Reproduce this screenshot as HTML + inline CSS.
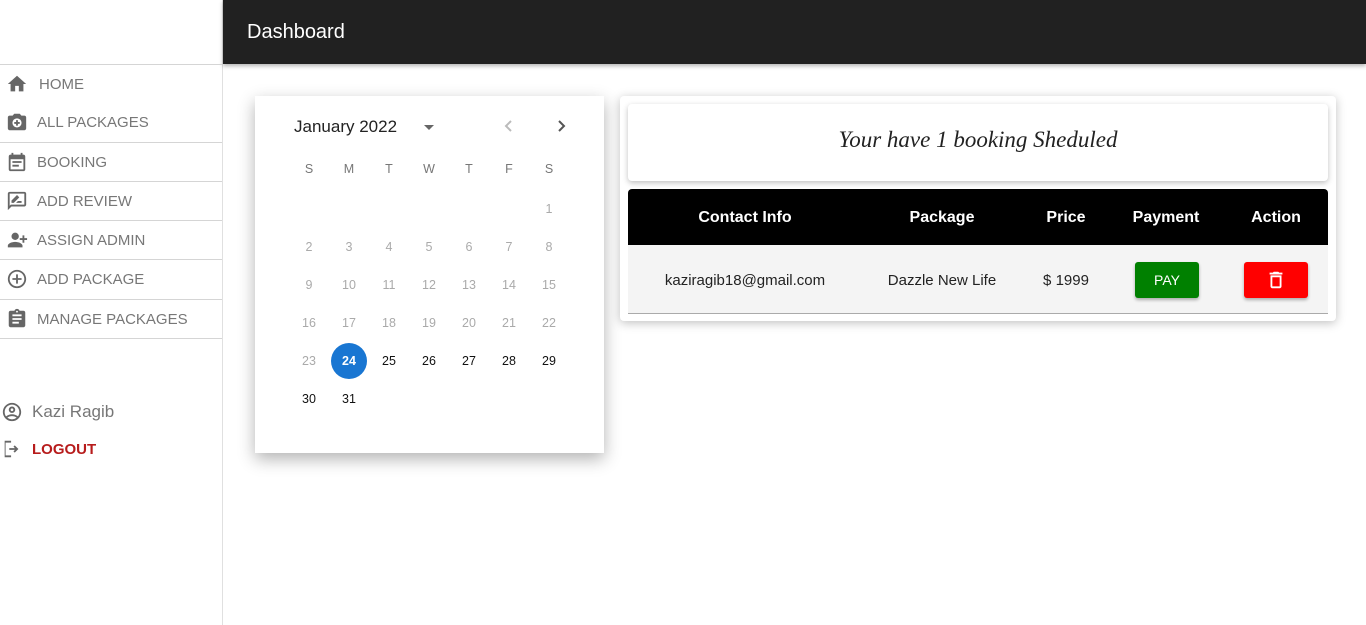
<!DOCTYPE html>
<html><head><style>
*{box-sizing:border-box;margin:0;padding:0}
body{width:1366px;height:625px;background:#fff;font-family:"Liberation Sans",sans-serif;position:relative;overflow:hidden}
.abs{position:absolute}
.side{left:0;top:0;width:223px;height:625px;border-right:1px solid #e0e0e0}
.hdr{left:223px;top:0;width:1143px;height:64px;background:#212121;color:#fff;font-size:20px;line-height:64px;padding-left:24px;box-shadow:0 2px 4px rgba(0,0,0,.3)}
.line{left:0;width:222px;height:1px;background:#d5d5d5}
.item{left:0;width:222px;font-size:15px;color:#777;display:flex;align-items:center}
.item svg{position:absolute;left:6px;width:22px;height:22px;fill:#666}
.item span{position:absolute;left:37px}
.cal{left:255px;top:96px;width:349px;height:357px;background:#fff;box-shadow:0 6px 16px rgba(0,0,0,.3)}
.c{position:absolute;width:36px;height:36px;line-height:36px;text-align:center;font-size:12.5px;margin-left:-18px;margin-top:-17px}
.card{left:620px;top:96px;width:716px;height:225px;background:#fff;box-shadow:0 2px 10px rgba(0,0,0,.25);border-radius:4px}
.th{color:#fff;font-weight:bold;font-size:16px;top:209px;transform:translateX(-50%)}
.td{color:#222;font-size:15px;top:272px;transform:translateX(-50%)}
</style></head><body>
<div class="abs side"></div>
<div class="abs hdr">Dashboard</div>
<div class="abs line" style="top:64px"></div>
<div class="abs line" style="top:142px"></div>
<div class="abs line" style="top:181px"></div>
<div class="abs line" style="top:220px"></div>
<div class="abs line" style="top:259px"></div>
<div class="abs line" style="top:299px"></div>
<div class="abs line" style="top:338px"></div>

<div class="abs item" style="top:74px;height:20px"><svg viewBox="0 0 24 24" style="left:6px"><path d="M10 20v-6h4v6h5v-8h3L12 3 2 12h3v8z"/></svg><span style="left:39px">HOME</span></div>
<div class="abs item" style="top:112px;height:20px"><svg viewBox="0 0 24 24"><path d="M9 3L7.2 5H4c-1.1 0-2 .9-2 2v12c0 1.1.9 2 2 2h16c1.1 0 2-.9 2-2V7c0-1.1-.9-2-2-2h-3.2L15 3zm3 5a5 5 0 110 10 5 5 0 010-10zm-1 2v2H9v2h2v2h2v-2h2v-2h-2v-2z"/></svg><span>ALL PACKAGES</span></div>
<div class="abs item" style="top:152px;height:20px"><svg viewBox="0 0 24 24"><path d="M19 4h-1V2h-2v2H8V2H6v2H5c-1.1 0-2 .9-2 2v14c0 1.1.9 2 2 2h14c1.1 0 2-.9 2-2V6c0-1.1-.9-2-2-2zm0 16H5V9h14zM7 11h10v2H7zm0 4h7v2H7z"/></svg><span>BOOKING</span></div>
<div class="abs item" style="top:191px;height:20px"><svg viewBox="0 0 24 24"><path d="M20 2H4c-1.1 0-2 .9-2 2v18l4-4h14c1.1 0 2-.9 2-2V4c0-1.1-.9-2-2-2zm0 14H5.2L4 17.2V4h16zM11 14h6v-2h-4zM6 14h2.5l6-6-2.5-2.5-6 6z"/></svg><span>ADD REVIEW</span></div>
<div class="abs item" style="top:230px;height:20px"><svg viewBox="0 0 24 24"><path d="M10 4a4 4 0 100 8 4 4 0 000-8zm0 10c-4 0-8 2-8 4v2h16v-2c0-2-4-4-8-4zm10-4V7h-2v3h-3v2h3v3h2v-3h3v-2z"/></svg><span>ASSIGN ADMIN</span></div>
<div class="abs item" style="top:269px;height:20px"><svg viewBox="0 0 24 24"><path d="M13 7h-2v4H7v2h4v4h2v-4h4v-2h-4zm-1-5C6.5 2 2 6.5 2 12s4.5 10 10 10 10-4.5 10-10S17.5 2 12 2zm0 18c-4.4 0-8-3.6-8-8s3.6-8 8-8 8 3.6 8 8-3.6 8-8 8z"/></svg><span>ADD PACKAGE</span></div>
<div class="abs item" style="top:309px;height:20px"><svg viewBox="0 0 24 24"><path d="M19 3h-4.2C14.4 1.8 13.3 1 12 1s-2.4.8-2.8 2H5c-1.1 0-2 .9-2 2v14c0 1.1.9 2 2 2h14c1.1 0 2-.9 2-2V5c0-1.1-.9-2-2-2zm-7 0c.6 0 1 .4 1 1s-.4 1-1 1-1-.4-1-1 .4-1 1-1zm2 14H7v-2h7zm3-4H7v-2h10zm0-4H7V7h10z"/></svg><span>MANAGE PACKAGES</span></div>

<div class="abs item" style="top:401px;height:22px;font-size:17px"><svg viewBox="0 0 24 24" style="left:1px"><path d="M12 2C6.5 2 2 6.5 2 12s4.5 10 10 10 10-4.5 10-10S17.5 2 12 2zm0 18c-1.9 0-3.7-.7-5.1-1.8C8.3 17 10 16.5 12 16.5s3.7.5 5.1 1.7C15.7 19.3 13.9 20 12 20zm6.5-3.2C16.7 15.4 14.5 14.5 12 14.5s-4.7.9-6.5 2.3C4.6 15.5 4 13.8 4 12c0-4.4 3.6-8 8-8s8 3.6 8 8c0 1.8-.6 3.5-1.5 4.8zM12 6c-1.9 0-3.5 1.6-3.5 3.5S10.1 13 12 13s3.5-1.6 3.5-3.5S13.9 6 12 6zm0 5c-.8 0-1.5-.7-1.5-1.5S11.2 8 12 8s1.5.7 1.5 1.5S12.8 11 12 11z"/></svg><span style="left:32px">Kazi Ragib</span></div>
<div class="abs item" style="top:439px;height:20px"><svg viewBox="0 0 24 24" style="left:1px"><path d="M4 3h7v2H5v14h6v2H4zm11 5l4 4-4 4-1.4-1.4 1.6-1.6H9v-2h6.2l-1.6-1.6z"/></svg><span style="left:32px;color:#b71c1c;font-weight:bold">LOGOUT</span></div>

<div class="abs cal">
<div class="abs" style="left:39px;top:21px;font-size:17px;color:#222">January 2022</div>
<div class="abs" style="left:169px;top:29px;width:0;height:0;border-left:5px solid transparent;border-right:5px solid transparent;border-top:5px solid #666"></div>
<svg class="abs" style="left:246px;top:21px" width="16" height="18" viewBox="0 0 16 18"><path d="M10 4L5 9l5 5" fill="none" stroke="#bbb" stroke-width="2"/></svg>
<svg class="abs" style="left:298px;top:21px" width="16" height="18" viewBox="0 0 16 18"><path d="M6 4l5 5-5 5" fill="none" stroke="#555" stroke-width="2"/></svg>
</div>
<div id="days"></div>
<script>
var h='',L=['S','M','T','W','T','F','S'];
for(var i=0;i<7;i++)h+='<div class="c" style="left:'+(309+40*i)+'px;top:168px;color:#777">'+L[i]+'</div>';
for(var d=1;d<=31;d++){var idx=d+5,col=idx%7,row=Math.floor(idx/7);
var st='left:'+(309+40*col)+'px;top:'+(208+38*row)+'px;';
if(d==24)st+='background:#1976d2;color:#fff;border-radius:50%;font-weight:bold;';
else if(d>24)st+='color:#111;';else st+='color:#aaa;';
h+='<div class="c" style="'+st+'">'+d+'</div>';}
document.getElementById('days').innerHTML=h;
</script>

<div class="abs card"></div>
<div class="abs" style="left:628px;top:104px;width:700px;height:77px;background:#fff;border-radius:4px;box-shadow:0 2px 6px rgba(0,0,0,.25);text-align:center;line-height:72px;font-family:'Liberation Serif',serif;font-style:italic;font-size:23px;color:#222">Your have 1 booking Sheduled</div>
<div class="abs" style="left:628px;top:189px;width:700px;height:56px;background:#000;border-radius:4px 4px 0 0"></div>
<div class="abs" style="left:628px;top:245px;width:700px;height:69px;background:#f4f4f4;border-bottom:1px solid #aaa"></div>
<div class="abs th" style="left:745px">Contact Info</div>
<div class="abs th" style="left:942px">Package</div>
<div class="abs th" style="left:1066px">Price</div>
<div class="abs th" style="left:1166px">Payment</div>
<div class="abs th" style="left:1276px">Action</div>
<div class="abs td" style="left:745px">kaziragib18@gmail.com</div>
<div class="abs td" style="left:942px">Dazzle New Life</div>
<div class="abs td" style="left:1066px">$ 1999</div>
<div class="abs" style="left:1135px;top:262px;width:64px;height:36px;background:#008000;border-radius:3px;color:#fff;font-size:14px;line-height:36px;text-align:center;box-shadow:0 2px 3px rgba(0,0,0,.3)">PAY</div>
<div class="abs" style="left:1244px;top:262px;width:64px;height:36px;background:#f00;border-radius:3px;box-shadow:0 2px 3px rgba(0,0,0,.3)"><svg viewBox="0 0 24 24" width="22" height="22" style="position:absolute;left:21px;top:7px"><path fill="#fff" d="M6 19c0 1.1.9 2 2 2h8c1.1 0 2-.9 2-2V7H6zM8 9h8v10H8zm7.5-5l-1-1h-5l-1 1H5v2h14V4z"/></svg></div>
</body></html>
